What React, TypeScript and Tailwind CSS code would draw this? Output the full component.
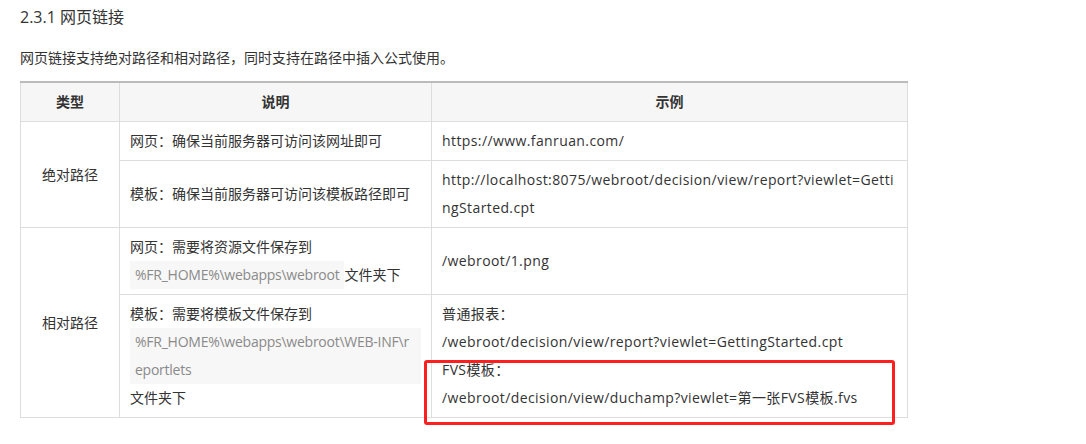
export default function App() {
  const cell = 'border border-[#ddd] px-[10px] py-[5px] leading-[28px] align-middle';
  const example = `${cell} break-all tracking-[0.4px]`;
  const code = 'inline-block align-top break-all bg-[#f7f7f7] px-[5px] tracking-[-0.25px] text-[#8a8a8a]';

  return (
    <div className="relative min-h-screen bg-white px-[20px] pt-[5px] font-['Open_Sans','Noto_Sans_CJK_SC',sans-serif] text-[14px] text-[#333]">
      <h3 className="text-[16px] leading-[24px]">2.3.1 网页链接</h3>
      <p className="mt-[17px] leading-[24px]">网页链接支持绝对路径和相对路径，同时支持在路径中插入公式使用。</p>

      <table className="mt-[11px] w-[887px] table-fixed border-collapse">
        <colgroup>
          <col className="w-[99px]" />
          <col className="w-[312px]" />
          <col className="w-[476px]" />
        </colgroup>
        <thead>
          <tr className="bg-[#f6f6f6]">
            <th className={`${cell} border-t-2 border-t-[#bbb] font-bold text-center`}>类型</th>
            <th className={`${cell} border-t-2 border-t-[#bbb] font-bold text-center`}>说明</th>
            <th className={`${cell} border-t-2 border-t-[#bbb] font-bold text-center`}>示例</th>
          </tr>
        </thead>
        <tbody>
          <tr>
            <td rowSpan={2} className={`${cell} text-center`}>绝对路径</td>
            <td className={cell}>网页：确保当前服务器可访问该网址即可</td>
            <td className={example}>https://www.fanruan.com/</td>
          </tr>
          <tr>
            <td className={cell}>模板：确保当前服务器可访问该模板路径即可</td>
            <td className={example}>http://localhost:8075/webroot/decision/view/report?viewlet=GettingStarted.cpt</td>
          </tr>
          <tr>
            <td rowSpan={2} className={`${cell} text-center`}>相对路径</td>
            <td className={cell}>
              网页：需要将资源文件保存到<span className={code}>%FR_HOME%\webapps\webroot</span>文件夹下
            </td>
            <td className={example}>/webroot/1.png</td>
          </tr>
          <tr>
            <td className={cell}>
              模板：需要将模板文件保存到<span className={code}>%FR_HOME%\webapps\webroot\WEB-INF\reportlets</span>文件夹下
            </td>
            <td className={example}>
              <div>普通报表：</div>
              <div>/webroot/decision/view/report?viewlet=GettingStarted.cpt</div>
              <div>FVS模板：</div>
              <div>/webroot/decision/view/duchamp?viewlet=第一张FVS模板.fvs</div>
            </td>
          </tr>
        </tbody>
      </table>

      {/* annotation box */}
      <div className="pointer-events-none absolute left-[424px] top-[360px] h-[65px] w-[471px] rounded-[3px] border-[3px] border-[#ff1f1f]" />
    </div>
  );
}
